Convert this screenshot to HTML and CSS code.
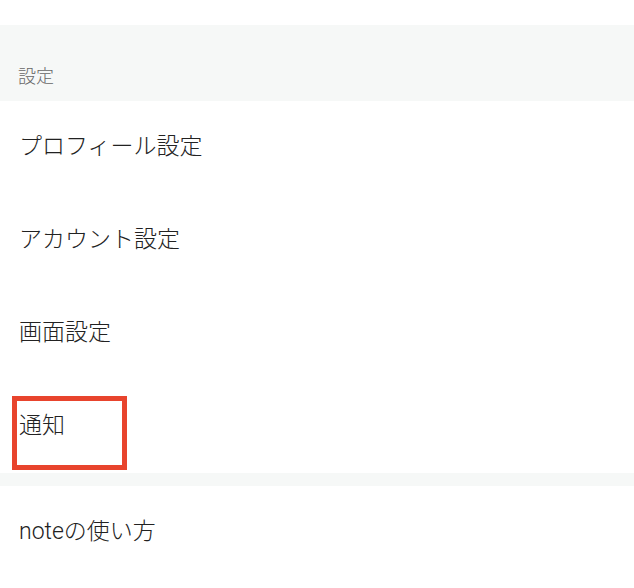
FILE: index.html
```html
<!DOCTYPE html>
<html>
<head>
  <title>設定</title>
  <link rel="stylesheet" href="styles.css">
</head>
<body>
  <div class="spacer"></div>
  <div class="section-title">設定</div>
  <ul class="menu">
    <li class="menu-item">プロフィール設定</li>
    <li class="menu-item">アカウント設定</li>
    <li class="menu-item">画面設定</li>
    <li class="menu-item">通知<span class="highlight-box"></span></li>
  </ul>
  <div class="divider"></div>
  <ul class="menu">
    <li class="menu-item">noteの使い方</li>
  </ul>
</body>
</html>
```
FILE: styles.css
```css
body {
  margin: 0;
  padding: 0;
  background-color: #fff;
  font-family: Roboto, "Noto Sans CJK JP", sans-serif;
  font-weight: 300;
  color: #222;
}

.spacer {
  height: 25px;
}

.section-title {
  background-color: #f6f8f7;
  height: 76px;
  box-sizing: border-box;
  padding: 40px 0 0 18px;
  font-size: 18px;
  line-height: 24px;
  color: #666;
}

.menu {
  list-style: none;
  margin: 0;
  padding: 0;
}

.menu-item {
  height: 93px;
  box-sizing: border-box;
  display: flex;
  align-items: center;
  padding: 0 0 7px 19px;
  font-size: 23px;
  position: relative;
}

/* red highlight around the notification row */
.highlight-box {
  position: absolute;
  left: 12px;
  top: 16px;
  width: 105px;
  height: 64px;
  border: 5px solid #e8442d;
}

.divider {
  height: 13px;
  background-color: #f6f8f7;
}
```
